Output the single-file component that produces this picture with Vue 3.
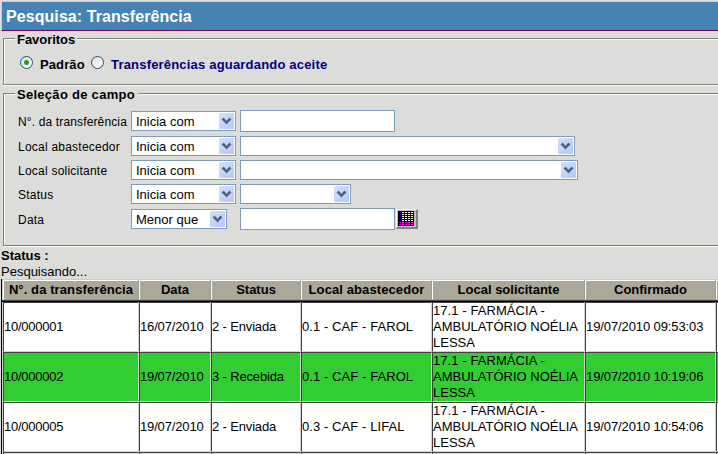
<script setup>
const chevron = 'M1 0h1v1h1v1h1v1h1V2h1V1h1V0h1v1h1v1H8v1H7v1H6v1H5v1H4V5H3V4H2V3H1V2H0V1h1z'
const criteria = [
  { label: 'N°. da transferência', cls: 'l1', op: 'Inicia com', kind: 'input' },
  { label: 'Local abastecedor', cls: 'l2', op: 'Inicia com', kind: 'select', width: 335 },
  { label: 'Local solicitante', cls: 'l3', op: 'Inicia com', kind: 'select', width: 338 },
  { label: 'Status', cls: 'l4', op: 'Inicia com', kind: 'select', width: 111 },
  { label: 'Data', cls: 'l5', op: 'Menor que', kind: 'date' },
]
const headers = ['N°. da transferência', 'Data', 'Status', 'Local abastecedor', 'Local solicitante', 'Confirmado', '']
const place = ['17.1 - FARMÁCIA -', 'AMBULATÓRIO NOÉLIA', 'LESSA']
const rows = [
  { id: '10/000001', date: '16/07/2010', status: '2 - Enviada', from: '0.1 - CAF - FAROL', done: '19/07/2010 09:53:03' },
  { id: '10/000002', date: '19/07/2010', status: '3 - Recebida', from: '0.1 - CAF - FAROL', done: '19/07/2010 10:19:06', green: true },
  { id: '10/000005', date: '19/07/2010', status: '2 - Enviada', from: '0.3 - CAF - LIFAL', done: '19/07/2010 10:54:06' },
]
</script>

<template>
  <main class="page">
    <h1 class="title"><span>Pesquisa: Transferência</span></h1>

    <section class="group favorites">
      <h2 class="legend"><span class="fav">Favoritos</span></h2>
      <div class="radios">
        <i class="radio on"></i><b class="padrao">Padrão</b>
        <i class="radio"></i><b class="link">Transferências aguardando aceite</b>
      </div>
    </section>

    <section class="group fields">
      <h2 class="legend"><span class="sel">Seleção de campo</span></h2>
      <div v-for="c in criteria" :key="c.label" class="row" :class="c.cls">
        <label><span>{{ c.label }}</span></label>
        <div class="opcell">
          <div class="select" :class="c.kind === 'date' ? 'menor' : 'inicia'">
            <span>{{ c.op }}</span>
            <i class="arrow"><svg width="9" height="6" viewBox="0 0 9 6"><path :d="chevron" /></svg></i>
          </div>
        </div>
        <div v-if="c.kind === 'select'" class="select" :style="{ width: c.width + 'px' }">
          <span></span>
          <i class="arrow"><svg width="9" height="6" viewBox="0 0 9 6"><path :d="chevron" /></svg></i>
        </div>
        <div v-else class="input"></div>
        <div v-if="c.kind === 'date'" class="calendar">
          <svg width="16" height="15" viewBox="0 0 16 15" shape-rendering="crispEdges">
            <rect width="16" height="15" fill="#000" />
            <template v-for="y in 7" :key="y">
              <rect v-for="x in 5" :key="x" :x="x * 3 - 2" :y="y * 2 - 1" width="2" height="1" :fill="y > 5 ? '#ff00ff' : x === 1 ? '#000080' : '#fff'" />
            </template>
          </svg>
        </div>
      </div>
    </section>

    <div class="status"><b>Status :</b><span>Pesquisando...</span></div>

    <div class="grid">
      <div class="line head">
        <div v-for="(h, i) in headers" :key="i" class="th"><span :class="'h' + i">{{ h }}</span></div>
      </div>
      <div class="rule"></div>
      <div v-for="r in rows" :key="r.id" class="line body" :class="{ green: r.green }">
        <div class="td"><span class="cid">{{ r.id }}</span></div>
        <div class="td"><span class="cdate">{{ r.date }}</span></div>
        <div class="td"><span class="cstatus">{{ r.status }}</span></div>
        <div class="td"><span class="cfrom">{{ r.from }}</span></div>
        <div class="td multi"><span v-for="(p, i) in place" :key="p" :class="'p' + i">{{ p }}</span></div>
        <div class="td"><span class="cdone">{{ r.done }}</span></div>
        <div class="td"></div>
      </div>
      <div class="line body next">
        <div v-for="n in 7" :key="n" class="td"></div>
      </div>
    </div>
  </main>
</template>

<style>
body { margin: 0; overflow: hidden; background: #dcdcda; }
</style>

<style scoped>
* { box-sizing: border-box; }
.page { width: 718px; height: 454px; overflow: hidden; background: #dcdcda; color: #000; font-family: "Liberation Sans", Arial, sans-serif; font-size: 13px; white-space: nowrap; padding-top: 1px; }
.title { margin: 0 0 0 1px; height: 30px; border-top: 1px solid #d8c8d8; border-left: 1px solid #d8c8d8; border-bottom: 1px solid #800050; background: #4682b4; color: #fff; font-size: 16px; line-height: 29px; padding-left: 4px; letter-spacing: 0.07px; }
.group { margin-left: 3px; width: 730px; border: 1px solid #808078; box-shadow: inset 1px 1px #fafaf4, 0 1px #fafaf4; }
.favorites { margin-top: 7px; height: 47px; }
.fields { margin-top: 8px; height: 153px; }
.legend { margin: -8px 0 0 11px; height: 16px; line-height: 17px; font-size: 13px; display: flex; }
.legend span { background: #dcdcda; padding-left: 2px; }
.fav { width: 62px; letter-spacing: -0.05px; }
.sel { width: 123px; letter-spacing: 0.28px; }
.radios { display: flex; align-items: center; height: 16px; margin: 7px 0 0 16px; }
.radio { width: 13px; height: 13px; border: 1px solid #1d5281; border-radius: 50%; background: linear-gradient(135deg, #dcdcd7, #fff); display: flex; align-items: center; justify-content: center; }
.radio.on::after { content: ""; width: 5px; height: 5px; border-radius: 50%; background: #21a121; }
.padrao { margin-left: 7px; width: 51px; padding-top: 4px; letter-spacing: 0.1px; }
.link { margin-left: 7px; color: #000080; padding-top: 4px; letter-spacing: 0.19px; }
.row { display: flex; align-items: center; height: 24px; }
.l1 { margin-top: 7px; height: 24px; }
.l2 { margin-top: 1px; }
.l5 { margin-top: 1px; }
label { width: 113px; margin-left: 14px; font-size: 12px; padding-top: 2px; letter-spacing: 0.23px; }
.l1 label { letter-spacing: 0.14px; }
.opcell { width: 109px; }
.select { height: 20px; background: #fff; border: 1px solid #7f9db9; display: flex; align-items: center; justify-content: space-between; padding: 0 1px 0 4px; font-size: 13px; }
.inicia { width: 105px; }
.menor { width: 96px; }
.arrow { width: 15px; height: 16px; border-radius: 1px; background: linear-gradient(135deg, #d4e0fd, #b2c8f8); display: flex; align-items: center; justify-content: center; }
.arrow svg { display: block; fill: #4d6185; stroke: #4d6185; stroke-width: 0.4; overflow: visible; }
.input { width: 155px; height: 22px; background: #fff; border: 1px solid #7f9db9; }
.calendar { margin-left: 1px; width: 22px; height: 20px; background: #c0c0c0; border: solid; border-width: 1px 2px 2px 1px; border-color: #fff #808080 #808080 #fff; padding: 1px; }
.calendar svg { display: block; }
.status { margin: 2px 0 0 1px; height: 31px; display: flex; flex-direction: column; line-height: 16px; }
.grid { margin-left: 1px; width: 760px; border-left: 1px solid #000; }
.line { display: grid; grid-template-columns: 136px 72px 90px 131px 153px 131px 46px; border-left: 1px solid #d0d0d0; }
.head { height: 21px; background: #aca899; border-top: 1px solid #ccc; }
.th { border-left: 1px solid #fff; border-top: 1px solid #fff; border-right: 1px solid #999; border-bottom: 1px solid #999; display: flex; justify-content: center; align-items: center; font-weight: bold; line-height: 15px; padding-bottom: 1px; }
.h0, .h3 { letter-spacing: 0.1px; }
.rule { height: 2px; background: #000; border-top: 1px solid #444; }
.body { height: 50px; background: #fff; }
.green { background: #32cd32; }
.next { background: #dcdcda; }
.td { border: 1px solid #d0d0d0; border-top-color: #404040; border-left-color: #404040; display: flex; align-items: center; line-height: 16px; }
.multi { flex-direction: column; align-items: flex-start; }
.cid { letter-spacing: -0.25px; }
.cdate { letter-spacing: -0.15px; }
.cstatus { letter-spacing: -0.15px; }
.cfrom, .p0 { letter-spacing: 0.08px; }
.cdone { letter-spacing: -0.1px; }
</style>
